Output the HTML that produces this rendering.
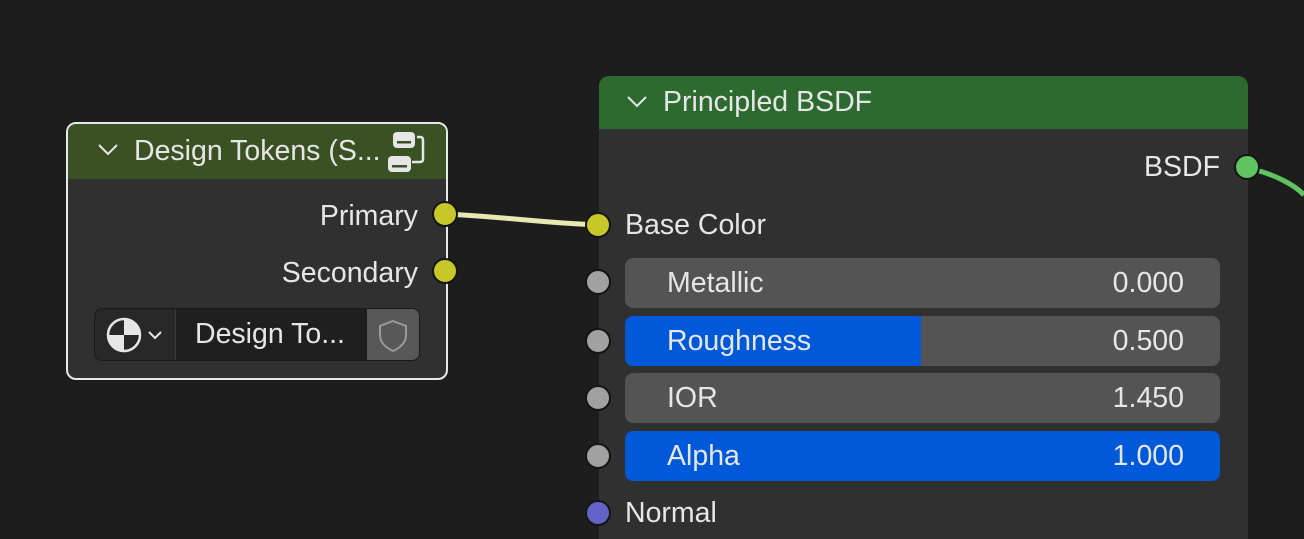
<!DOCTYPE html>
<html><head><style>
html,body{margin:0;padding:0;width:1304px;height:539px;overflow:hidden;}
body{background:#1d1d1d;position:relative;font-family:"Liberation Sans",sans-serif;color:#e6e6e6;}
.abs{position:absolute;}
.sock{position:absolute;width:22px;height:22px;border-radius:50%;border:2px solid #151515;box-sizing:content-box;}
.lbl{position:absolute;font-size:28.5px;line-height:30px;white-space:nowrap;}
.field{position:absolute;left:625px;width:595px;height:50px;border-radius:8px;background:#545454;overflow:hidden;}
.field .fill{position:absolute;left:0;top:0;bottom:0;background:#0059d9;}
.field .n{position:absolute;left:42px;top:10px;font-size:28.5px;line-height:30px;}
.field .v{position:absolute;right:36px;top:10px;font-size:28.5px;line-height:30px;}
</style></head><body>
<svg class="abs" style="left:0;top:0" width="1304" height="539">
<path d="M446 214 C520 218, 530 222, 598 225" stroke="#e8e8b0" stroke-width="5" fill="none"/>
<path d="M1256 170 C1275 175, 1295 185, 1304 195" stroke="#5fc45f" stroke-width="5" fill="none"/>
</svg>

<!-- Node 1 -->
<div class="abs" style="left:66px;top:122px;width:378px;height:254px;border:2px solid #e8e8e8;border-radius:10px;background:#303030;overflow:hidden;">
  <div class="abs" style="left:0;top:0;width:100%;height:55px;background:#3a5123;"></div>
  <svg class="abs" style="left:28px;top:16px" width="26" height="20"><path d="M3 5 L12 14 L21 5" stroke="#e6e6e6" stroke-width="2" fill="none"/></svg>
  <div class="lbl" style="left:66px;top:12px;">Design Tokens (S...</div>
  <svg class="abs" style="left:318px;top:6px" width="44" height="44">
    <rect x="7" y="2" width="22" height="16" rx="4" fill="#e6e6e6"/><rect x="11" y="11" width="14" height="2.5" fill="#3a5123"/>
    <rect x="2" y="26" width="23" height="16" rx="4" fill="#e6e6e6"/><rect x="6" y="35" width="15" height="2.5" fill="#3a5123"/>
    <path d="M31 7 h3 q3 0 3 3 v19 q0 3 -3 3 h-8" stroke="#e6e6e6" stroke-width="2.5" fill="none"/>
  </svg>
  <div class="lbl" style="right:28px;top:77px;">Primary</div>
  <div class="lbl" style="right:28px;top:134px;">Secondary</div>
  <div class="abs" style="left:26px;top:184px;width:324px;height:51px;border-radius:8px;background:#282828;border:1px solid #1a1a1a;overflow:hidden;">
    <div class="abs" style="left:80px;top:0;width:192px;height:51px;background:#1f1f1f;border-left:1px solid #3a3a3a;"></div>
    <div class="abs" style="left:272px;top:0;width:52px;height:51px;background:#585858;"></div>
    <svg class="abs" style="left:10px;top:7px" width="64" height="38">
      <circle cx="19" cy="19" r="16" fill="#e6e6e6"/>
      <path d="M19 19 L19 3 A16 16 0 0 0 3 19 Z" fill="#282828"/>
      <path d="M19 19 L35 19 A16 16 0 0 1 19 35 Z" fill="#282828"/>
      <circle cx="19" cy="19" r="16" fill="none" stroke="#e6e6e6" stroke-width="2.5"/>
      <path d="M44 16 L50 22 L56 16" stroke="#e6e6e6" stroke-width="2" fill="none"/>
    </svg>
    <div class="lbl" style="left:100px;top:10px;">Design To...</div>
    <svg class="abs" style="left:280px;top:8px" width="36" height="36"><path d="M18 4 L31 9 V18 Q31 28 18 34 Q5 28 5 18 V9 Z" stroke="#9a9a9a" stroke-width="2" fill="none"/></svg>
  </div>
</div>
<div class="sock" style="left:432px;top:201px;background:#c7c72a;"></div>
<div class="sock" style="left:432px;top:258px;background:#c7c72a;"></div>

<!-- Node 2 -->
<div class="abs" style="left:599px;top:76px;width:649px;height:463px;border-radius:10px 10px 0 0;background:#303030;overflow:hidden;">
  <div class="abs" style="left:0;top:0;width:100%;height:53px;background:#2d6a2f;"></div>
  <svg class="abs" style="left:26px;top:16px" width="26" height="20"><path d="M3 5 L12 14 L21 5" stroke="#e6e6e6" stroke-width="2" fill="none"/></svg>
  <div class="lbl" style="left:64px;top:11px;">Principled BSDF</div>
  <div class="lbl" style="right:28px;top:76px;">BSDF</div>
  <div class="lbl" style="left:26px;top:134px;">Base Color</div>
  <div class="lbl" style="left:26px;top:422px;">Normal</div>
</div>
<div class="field" style="top:258px;"><div class="n">Metallic</div><div class="v">0.000</div></div>
<div class="field" style="top:316px;"><div class="fill" style="width:296px"></div><div class="n">Roughness</div><div class="v">0.500</div></div>
<div class="field" style="top:373px;"><div class="n">IOR</div><div class="v">1.450</div></div>
<div class="field" style="top:431px;background:#0059d9;"><div class="n">Alpha</div><div class="v">1.000</div></div>

<div class="sock" style="left:1234px;top:154px;background:#5fc45f;"></div>
<div class="sock" style="left:585px;top:212px;background:#c7c72a;"></div>
<div class="sock" style="left:585px;top:269px;background:#a1a1a1;"></div>
<div class="sock" style="left:585px;top:328px;background:#a1a1a1;"></div>
<div class="sock" style="left:585px;top:385px;background:#a1a1a1;"></div>
<div class="sock" style="left:585px;top:443px;background:#a1a1a1;"></div>
<div class="sock" style="left:585px;top:500px;background:#6363c7;"></div>
</body></html>
